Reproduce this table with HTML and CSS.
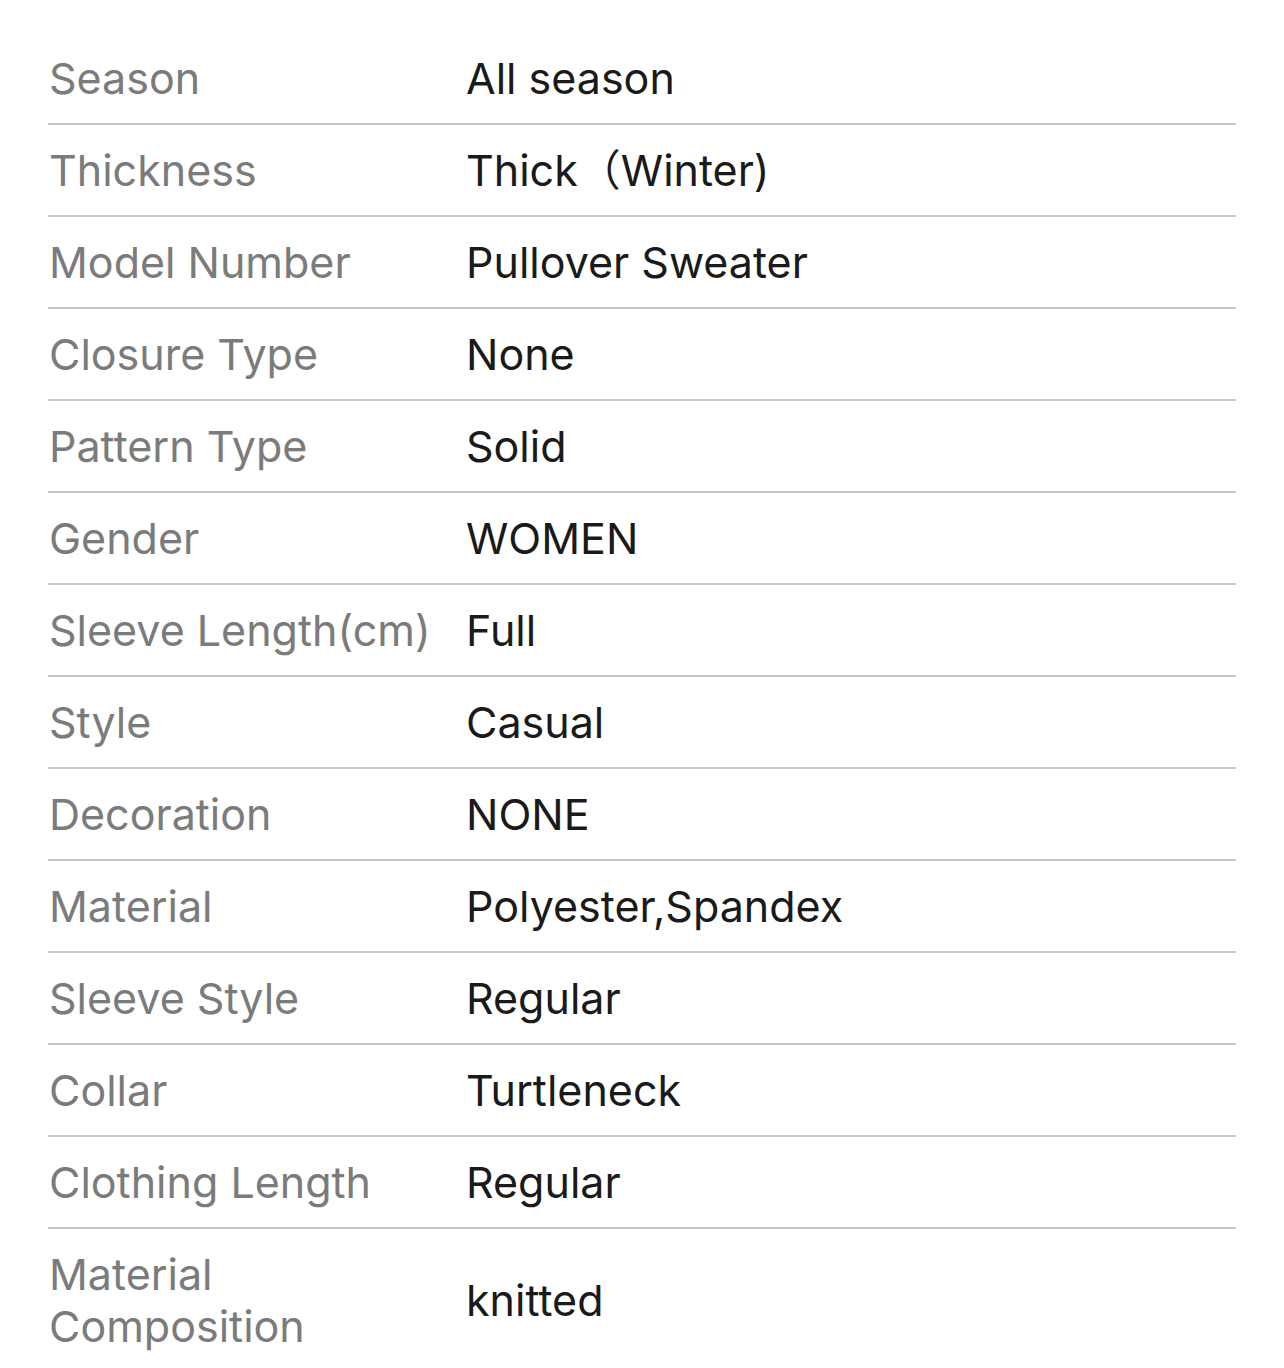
FILE: index.html
```html
<!DOCTYPE html>
<html>
<head>
<meta charset="utf-8">
<link rel="stylesheet" href="styles.css">
</head>
<body>
<div class="specs">
  <div class="row"><div class="label">Season</div><div class="value">All season</div></div>
  <div class="row"><div class="label">Thickness</div><div class="value">Thick（Winter)</div></div>
  <div class="row"><div class="label">Model Number</div><div class="value">Pullover Sweater</div></div>
  <div class="row"><div class="label">Closure Type</div><div class="value">None</div></div>
  <div class="row"><div class="label">Pattern Type</div><div class="value">Solid</div></div>
  <div class="row"><div class="label">Gender</div><div class="value">WOMEN</div></div>
  <div class="row"><div class="label">Sleeve Length(cm)</div><div class="value">Full</div></div>
  <div class="row"><div class="label">Style</div><div class="value">Casual</div></div>
  <div class="row"><div class="label">Decoration</div><div class="value">NONE</div></div>
  <div class="row"><div class="label">Material</div><div class="value">Polyester,Spandex</div></div>
  <div class="row"><div class="label">Sleeve Style</div><div class="value">Regular</div></div>
  <div class="row"><div class="label">Collar</div><div class="value">Turtleneck</div></div>
  <div class="row"><div class="label">Clothing Length</div><div class="value">Regular</div></div>
  <div class="row last"><div class="label">Material Composition</div><div class="value">knitted</div></div>
</div>
</body>
</html>
```
FILE: styles.css
```css
html, body {
  margin: 0;
  padding: 0;
  background: #ffffff;
}
body {
  font-family: Inter, "Noto Sans CJK SC", sans-serif;
  overflow: hidden;
}
.specs {
  margin: 0 48px;
  padding-top: 33px;
}
.row {
  display: grid;
  grid-template-columns: 418px 1fr;
  align-items: center;
  padding: 19px 0;
  border-bottom: 2px solid #c8c8c8;
  font-size: 43px;
  line-height: 52px;
}
.row.last {
  border-bottom: none;
}
.label {
  color: #7b7b7b;
  padding-left: 1px;
}
.value {
  color: #1a1a1a;
}
```
